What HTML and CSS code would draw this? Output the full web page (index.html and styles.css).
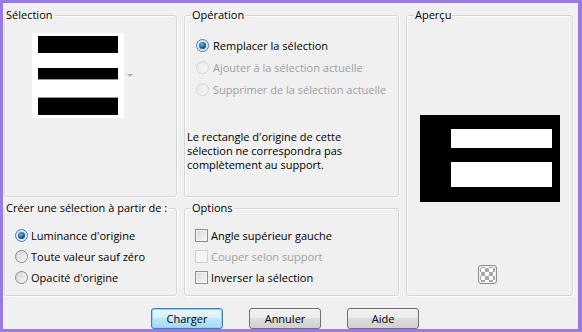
FILE: index.html
```html
<!DOCTYPE html>
<html>

<head>
    <title>Charger la sélection</title>
    <meta charset="utf-8">
    <link rel="stylesheet" href="styles.css">
</head>

<body>
    <div class="fenetre">
        <div class="panneaux">

            <fieldset class="groupe selection">
                <legend>Sélection</legend>
                <div class="vignette-ligne">
                    <div class="vignette">
                        <div class="barre b1"></div>
                        <div class="barre b2"></div>
                        <div class="barre b3"></div>
                    </div>
                    <span class="fleche"></span>
                </div>
            </fieldset>

            <fieldset class="groupe operation">
                <legend>Opération</legend>
                <div class="choix">
                    <label class="ligne"><span class="radio coche"></span>Remplacer la sélection</label>
                    <label class="ligne inactif"><span class="radio"></span>Ajouter à la sélection actuelle</label>
                    <label class="ligne inactif"><span class="radio"></span>Supprimer de la sélection actuelle</label>
                </div>
                <p class="avis">Le rectangle d'origine de cette<br>sélection ne correspondra pas<br>complètement au support.</p>
            </fieldset>

            <fieldset class="groupe apercu">
                <legend>Aperçu</legend>
                <div class="apercu-image">
                    <div class="bande c1"></div>
                    <div class="bande c2"></div>
                </div>
                <span class="damier"></span>
            </fieldset>

            <fieldset class="groupe creer">
                <legend>Créer une sélection à partir de :</legend>
                <div class="choix serre">
                    <label class="ligne"><span class="radio coche"></span>Luminance d'origine</label>
                    <label class="ligne"><span class="radio"></span>Toute valeur sauf zéro</label>
                    <label class="ligne"><span class="radio"></span>Opacité d'origine</label>
                </div>
            </fieldset>

            <fieldset class="groupe options">
                <legend>Options</legend>
                <div class="choix serre">
                    <label class="ligne"><span class="case"></span>Angle supérieur gauche</label>
                    <label class="ligne inactif"><span class="case"></span>Couper selon support</label>
                    <label class="ligne"><span class="case"></span>Inverser la sélection</label>
                </div>
            </fieldset>

        </div>

        <div class="boutons">
            <button class="bouton defaut">Charger</button>
            <button class="bouton">Annuler</button>
            <button class="bouton">Aide</button>
        </div>
    </div>
</body>

</html>
```

FILE: styles.css
```css
html,
body {
    margin: 0;
    padding: 0;
}

body {
    font-family: "Open Sans", "Noto Sans", sans-serif;
    font-size: 11px;
    color: #000;
    background-color: #f0f0f0;
}

.fenetre {
    box-sizing: border-box;
    width: 582px;
    height: 332px;
    border-style: solid;
    border-color: #9a7ae2;
    border-width: 3px 4px 3px 3px;
    background-color: #f0f0f0;
    padding: 5px 0 0 1px;
}

/* GRILLE */

.panneaux {
    display: grid;
    grid-template-columns: 173px 215px 167px;
    grid-template-rows: 189px 95px;
    column-gap: 7px;
    row-gap: 4px;
}

.groupe {
    margin: 0;
    padding: 0;
    min-width: 0;
    border: 1px solid #d5d5d5;
    border-radius: 3px;
    box-shadow: inset 1px 1px 0 #fff, 1px 1px 0 #fff;
}

.groupe legend {
    line-height: 14px;
    padding: 0 1px;
    margin-left: 0;
    white-space: nowrap;
}

.operation legend,
.options legend {
    margin-left: 6px;
}

.apercu {
    grid-column: 3;
    grid-row: 1 / span 2;
}

.apercu legend {
    margin-left: 7px;
}

.creer {
    grid-column: 1;
    grid-row: 2;
}

.options {
    grid-column: 2;
    grid-row: 2;
}

/* SELECTION */

.vignette-ligne {
    display: flex;
    align-items: center;
    margin: 11px 0 0 27px;
}

.vignette {
    width: 92px;
    height: 85px;
    background-color: #fff;
    padding: 0 6px;
    box-sizing: border-box;
}

.barre {
    background-color: #000;
}

.b1 {
    margin-top: 3px;
    height: 17px;
}

.b2 {
    margin-top: 15px;
    height: 11px;
    box-shadow: 0 1px 0 #999;
}

.b3 {
    margin-top: 19px;
    height: 17px;
    box-shadow: 0 -1px 0 #999;
}

.fleche {
    margin-left: 3px;
    width: 0;
    height: 0;
    border-left: 3px solid transparent;
    border-right: 3px solid transparent;
    border-top: 3px solid #b0b0b0;
}

/* OPTIONS */

.choix {
    display: flex;
    flex-direction: column;
    margin: 12px 0 0 11px;
}

.ligne {
    display: flex;
    align-items: center;
    gap: 4px;
    height: 22px;
    white-space: nowrap;
}

.serre {
    margin-top: 10px;
    margin-left: 10px;
}

.serre .ligne {
    height: 21px;
    gap: 3px;
}

.inactif {
    color: #a0a0a0;
}

.radio {
    width: 11px;
    height: 11px;
    border-radius: 50%;
    border: 1px solid #8a8a8a;
    background: linear-gradient(135deg, #d4d4d4, #fafafa);
    display: flex;
    align-items: center;
    justify-content: center;
    flex: none;
}

.radio.coche::after {
    content: "";
    width: 7px;
    height: 7px;
    border-radius: 50%;
    background: radial-gradient(circle at 40% 35%, #6fb5e8, #1d5b93 55%, #0c3458);
}

.radio.coche {
    border-color: #4d7ea8;
    background: #dbe9f5;
}

.inactif .radio {
    border-color: #d4d4d4;
    background: linear-gradient(135deg, #e8e8e8, #f7f7f7);
}

.case {
    width: 11px;
    height: 11px;
    border: 1px solid #8f8f8f;
    background: linear-gradient(135deg, #dcdcdc, #f6f6f6);
    box-shadow: inset 0 0 0 1px #f4f4f4;
    flex: none;
}

.inactif .case {
    border-color: #d0d0d0;
    background: #f4f4f4;
}

.avis {
    margin: 30px 0 0 2px;
    line-height: 14px;
}

/* APERCU */

.apercu-image {
    width: 140px;
    height: 87px;
    background-color: #000;
    margin: 93px 0 0 13px;
    padding: 14px 8px 0 31px;
    box-sizing: border-box;
}

.bande {
    background-color: #fff;
}

.c1 {
    height: 19px;
}

.c2 {
    margin-top: 14px;
    height: 25px;
}

.damier {
    display: block;
    width: 19px;
    height: 19px;
    margin: 63px 0 0 71px;
    border: 1px solid #8c8c8c;
    border-radius: 3px;
    background-color: #fff;
    background-image:
        linear-gradient(45deg, #a8a8a8 25%, transparent 25%, transparent 75%, #a8a8a8 75%),
        linear-gradient(45deg, #a8a8a8 25%, transparent 25%, transparent 75%, #a8a8a8 75%);
    background-size: 8px 8px;
    background-position: 2px 2px, 6px 6px;
    background-clip: content-box;
    padding: 1px;
    box-sizing: border-box;
}

/* BOUTONS */

.boutons {
    display: flex;
    gap: 26px;
    padding-left: 147px;
    margin-top: 12px;
}

.bouton {
    width: 72px;
    height: 21px;
    padding: 0;
    font-family: "Open Sans", "Noto Sans", sans-serif;
    font-size: 11px;
    color: #000;
    border: 1px solid #707070;
    border-radius: 3px;
    background: linear-gradient(#f3f3f3 0%, #ebebeb 45%, #dddddd 50%, #cfcfcf 100%);
}

.bouton.defaut {
    border-color: #3c7fb1;
    background: linear-gradient(#eaf6fd 0%, #d9f0fc 45%, #bee6fd 50%, #a7d9f5 100%);
    box-shadow: inset 0 0 0 1px #8fd3f5;
}
```
